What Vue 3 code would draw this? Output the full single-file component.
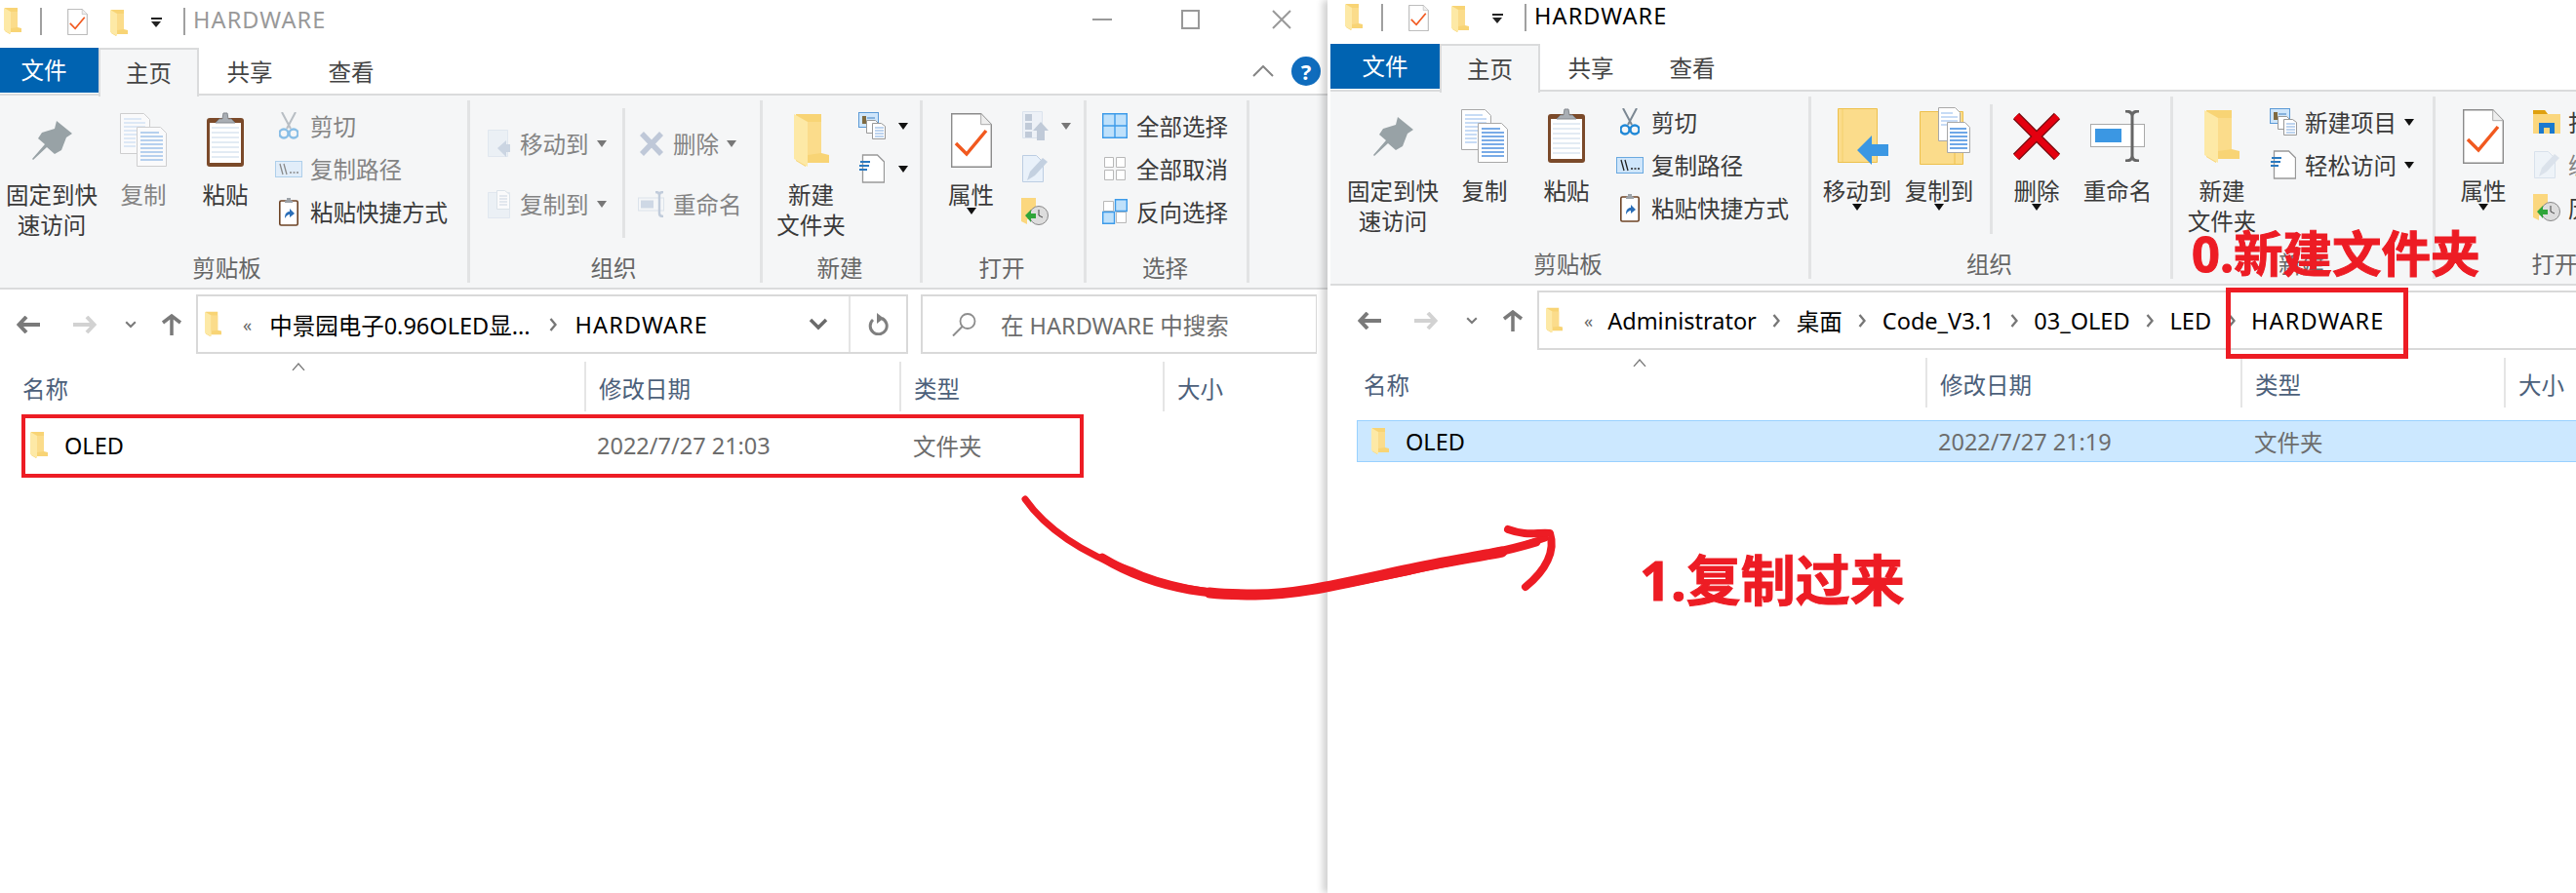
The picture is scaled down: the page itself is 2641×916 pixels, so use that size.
<template>
  <div class="page">
    <!-- shared icon sprite -->
    <svg class="sprite" width="0" height="0">
      <symbol id="folder" viewBox="0 0 18 27">
        <path d="M1 0h13v20l4 1v4H6v2l-5-3z" fill="#f8d475" />
        <path d="M0 0l7 4v23l-7-4z" fill="#fde9a6" />
        <path d="M7 4h7v16l-7 1z" fill="#fbdc8b" />
      </symbol>
      <symbol id="doccheck" viewBox="0 0 42 56">
        <path d="M.7.7h30l10.6 11v43.600H.7z" fill="#fff" stroke="#8b8b8b" stroke-width="1.400" />
        <path d="M30.700.7v11h10.600" fill="#eee" stroke="#aaa" />
        <path d="M5 31l11 11L36 18" fill="none" stroke="#f1591f" stroke-width="3.500" />
      </symbol>
      <symbol id="pin" viewBox="0 0 41 40">
        <path d="M25 0l16 13-6 4-5 13-7 4-8-7L1 40l-1-1 13-15-7-6 4-6 13-4z" fill="#98a2a6" />
      </symbol>
      <symbol id="copy" viewBox="0 0 48 55">
        <path d="M.5.5h24l6 6v35H.5z" fill="#fff" stroke="#a8a8a8" />
        <path d="M4 6h18M4 10h22M4 14h22M4 18h22M4 22h22M4 26h12M4 30h12M4 34h12" stroke="#8fb8ec" />
        <path d="M17.500 14.500h24l6 6v34h-30z" fill="#fff" stroke="#a8a8a8" />
        <path d="M21 20h19M21 24h23M21 28h23M21 32h23M21 36h23M21 40h23M21 44h23M21 48h23" stroke="#4d90e0" stroke-width="1.300" />
      </symbol>
      <symbol id="paste" viewBox="0 0 40 57">
        <rect x="1" y="6" width="38" height="50" rx="3" fill="#7b4a2a" />
        <rect x="4" y="11" width="32" height="41" fill="#fff" />
        <path d="M6 16h28M6 21h28M6 26h28M6 31h28M6 36h28M6 41h28M6 46h28" stroke="#c6d7e8" />
        <path d="M10 11l4-4h3l1-6h4l1 6h3l4 4z" fill="#a9aeb4" stroke="#83888e" />
      </symbol>
      <symbol id="cut" viewBox="0 0 20 28">
        <path d="M3 0l9 17M17 0L8 17" stroke="#7c8893" stroke-width="2" fill="none" />
        <circle cx="5" cy="22" r="4.500" fill="none" stroke="#1f87d6" stroke-width="2.400" />
        <circle cx="15" cy="22" r="4.500" fill="none" stroke="#1f87d6" stroke-width="2.400" />
      </symbol>
      <symbol id="path" viewBox="0 0 28 17">
        <rect x=".5" y=".5" width="27" height="16" fill="#cfe6fb" stroke="#6aa9e0" />
        <path d="M5 3l3 11M9 3l3 11" stroke="#222" stroke-width="1.300" />
        <path d="M15 12h2M18.500 12h2M22 12h2" stroke="#222" stroke-width="1.500" />
      </symbol>
      <symbol id="shortcut" viewBox="0 0 20 29">
        <rect x=".8" y="3" width="18.400" height="25" rx="1.500" fill="#fff" stroke="#6d4325" stroke-width="1.600" />
        <path d="M6 3l2-1V0h4v2l2 1v2H6z" fill="#9ca2a8" />
        <path d="M6 21c0-5 2-7 5-7v-3l5 5-5 4v-3c-2 0-3 1-5 4z" fill="#2c6fb8" />
      </symbol>
      <symbol id="moveBig" viewBox="0 0 52 58">
        <path d="M.5.5h40v55H.5z" fill="#fbdc8b" stroke="#edc04c" />
        <path d="M5 1v54" stroke="#f4cf6c" />
        <path d="M20 43L35 28v9h17v12H35v9z" fill="#3b97e3" />
      </symbol>
      <symbol id="copyBig" viewBox="0 0 52 59">
        <path d="M.5 4.500h44v54H.5z" fill="#fbdc8b" stroke="#edc04c" />
        <path d="M36 46v12" stroke="#edc04c" />
        <path d="M19.500.5h17l5 5v29h-22z" fill="#fff" stroke="#a8a8a8" />
        <path d="M22 6h12M22 10h17M22 14h17M22 18h17" stroke="#8fb8ec" />
        <path d="M28.500 15.500h18l5 5v26h-23z" fill="#fff" stroke="#a8a8a8" />
        <path d="M31 22h17M31 26h18M31 30h18M31 34h18M31 38h18M31 42h18" stroke="#3f8ae0" stroke-width="1.300" />
      </symbol>
      <symbol id="moveSmall" viewBox="0 0 23 28">
        <path d="M.5.500h20v27H.5z" fill="#e2ebf5" stroke="#cdd9e8" />
        <path d="M10 19l9-8v4h4v8h-4v5z" fill="#a2b5cf" />
      </symbol>
      <symbol id="copySmall" viewBox="0 0 23 29">
        <path d="M.5 2.500h22v26H.5z" fill="#e2ebf5" stroke="#cdd9e8" />
        <path d="M9.500.5h8l5 4v15h-13z" fill="#fff" stroke="#c3cfdd" />
        <path d="M12 6h8M12 9h8M12 12h8M12 15h8" stroke="#a2b5cf" />
      </symbol>
      <symbol id="xSmall" viewBox="0 0 26 25">
        <path d="M3 2l20 21M23 2L3 23" stroke="#8a9cba" stroke-width="5.500" fill="none" />
      </symbol>
      <symbol id="renameSmall" viewBox="0 0 28 27">
        <rect x=".5" y="7" width="26" height="13" fill="#f4f7fa" stroke="#c4d1e0" />
        <rect x="3" y="9.500" width="13" height="8" fill="#a9bbd4" />
        <path d="M18 1c3 0 4 1 4 3v19c0 2 1 3 4 3M26 1c-3 0-4 1-4 3M26 26c-3 0-4-1-4-3" fill="none" stroke="#8fa3c0" stroke-width="2.400" />
      </symbol>
      <symbol id="xBig" viewBox="0 0 50 50">
        <path d="M4 4l42 42M46 4L4 46" stroke="#7d0b0f" stroke-width="9" fill="none" />
        <path d="M4 4l42 42M46 4L4 46" stroke="#e4000f" stroke-width="6.500" fill="none" />
      </symbol>
      <symbol id="renameBig" viewBox="0 0 56 53">
        <rect x=".5" y="14.500" width="55" height="23" fill="#fff" stroke="#a9a9a9" />
        <rect x="5" y="19" width="27" height="14" fill="#3b97e3" />
        <path d="M36 1c5 0 7 2 7 5v41c0 3 2 5 7 5M50 1c-5 0-7 2-7 5M50 52c-5 0-7-2-7-5M36 52c5 0 7-2 7-5" fill="none" stroke="#666" stroke-width="3" />
      </symbol>
      <symbol id="newItem" viewBox="0 0 28 28">
        <rect x=".5" y=".5" width="20" height="15" fill="#cfe6fb" stroke="#5c9ad6" />
        <path d="M4 4h4v8H4z" fill="#7f6a40" />
        <path d="M9 6h8M9 9h5" stroke="#3f7fbf" />
        <path d="M8.500 8.500h9l3 3v10h-12z" fill="#fff" stroke="#999" />
        <path d="M14.500 11.500h9l4 3v13h-13z" fill="#fff" stroke="#999" />
        <path d="M17 16h9M17 19h9M17 22h9M17 25h9" stroke="#7ca9df" />
      </symbol>
      <symbol id="easy" viewBox="0 0 26 30">
        <path d="M3.500 1h15l7 7v21h-22z" fill="#fff" stroke="#999" stroke-width="1.300" />
        <path d="M1 8h10M0 12h10M0 16h8" stroke="#2c7ac0" stroke-width="2" />
      </symbol>
      <symbol id="openSmall" viewBox="0 0 27 30">
        <path d="M.5.500h20v27H.5z" fill="#e6eef8" stroke="#c3d2e4" />
        <path d="M3 3h7v7H3zM3 12h7v7H3zM3 21h7v6H3z" fill="#8da0ba" />
        <path d="M19 11l8 9h-4v10h-8V20h-4z" fill="#8da0ba" />
      </symbol>
      <symbol id="openHome" viewBox="0 0 28 24">
        <path d="M0 0h12l3 4h13v20H0z" fill="#fbd77e" />
        <path d="M0 0h12l3 4H0z" fill="#dfa00f" />
        <path d="M6 24v-11h16v11h-5v-6h-6v6z" fill="#1a79cf" />
      </symbol>
      <symbol id="edit" viewBox="0 0 27 28">
        <path d="M.5.5h14l7 7v20H.5z" fill="#e9f1fa" stroke="#bccde2" />
        <path d="M5 26l3-9L21 3l5 4-13 14z" fill="#c3d0e0" />
      </symbol>
      <symbol id="history" viewBox="0 0 28 28">
        <path d="M0 0h15v22H6v5l-6-3z" fill="#fbd77e" />
        <circle cx="18" cy="18" r="9.500" fill="#ddd" stroke="#888" />
        <path d="M18 12v6l4 2" stroke="#444" fill="none" />
        <path d="M4 18l6-6v4h5v5h-5v4z" fill="#2fa53a" />
      </symbol>
      <symbol id="selAll" viewBox="0 0 26 26">
        <path d="M.7.7h24.600v24.600H.7z" fill="#bfe1fb" stroke="#3d9be9" stroke-width="1.400" />
        <path d="M13 1v24M1 13h24" stroke="#3d9be9" stroke-width="1.400" />
      </symbol>
      <symbol id="selNone" viewBox="0 0 26 26">
        <path d="M2.500 1.500h9v10h-9zM14.500 1.500h9v10h-9zM2.500 14.500h9v10h-9zM14.500 14.500h9v10h-9z" fill="#fff" stroke="#b8b8b8" />
      </symbol>
      <symbol id="selInv" viewBox="0 0 26 26">
        <path d="M1.500 2.500h10v10h-10zM14.500 13.500h10v11h-10z" fill="#fff" stroke="#b8b8b8" />
        <path d="M13.500.7h11.800v11.800H13.500zM.7 13.500h11.800v11.800H.7z" fill="#bfe1fb" stroke="#3d9be9" stroke-width="1.400" />
      </symbol>
      <symbol id="navBack" viewBox="0 0 24 18">
        <path d="M10 1L2.500 9l7.500 8M3 9h21" fill="none" stroke="currentColor" stroke-width="4" />
      </symbol>
      <symbol id="navUp" viewBox="0 0 22 22">
        <path d="M2 9l9-7 9 7M11 3v19" fill="none" stroke="currentColor" stroke-width="3.500" />
      </symbol>
      <symbol id="chev" viewBox="0 0 20 13">
        <path d="M2 2l8 8 8-8" fill="none" stroke="currentColor" stroke-width="3.500" />
      </symbol>
      <symbol id="crumbChev" viewBox="0 0 8 14">
        <path d="M1.500 1l5 6-5 6" fill="none" stroke="#777" stroke-width="2.400" />
      </symbol>
      <symbol id="refresh" viewBox="0 0 22 23">
        <path d="M14 5.500A8.500 8.500 0 1 1 5 7" fill="none" stroke="#7f7f7f" stroke-width="3" />
        <path d="M9 0l7 5.500-7 5.500z" fill="#7f7f7f" />
      </symbol>
      <symbol id="search" viewBox="0 0 26 24">
        <circle cx="17" cy="8.500" r="7.500" fill="none" stroke="#8c8c8c" stroke-width="1.800" />
        <path d="M11.500 14L2 23.500" stroke="#8c8c8c" stroke-width="2" />
      </symbol>
    </svg>

    <div v-for="win in windows" :key="win.id" class="win" :class="win.id">
      <div class="win-inner">
        <div class="titlebar">
          <svg class="qa-folder" width="18" height="27"><use href="#folder" /></svg>
          <span class="qa-sep"></span>
          <svg class="qa-doc" width="21" height="27"><use href="#doccheck" /></svg>
          <svg class="qa-folder2" width="18" height="27"><use href="#folder" /></svg>
          <span class="qa-drop"></span>
          <span class="qa-sep last"></span>
          <span class="title-text">HARDWARE</span>
          <div v-if="win.id === 'left'" class="win-controls">
            <span class="ctl-min"></span>
            <span class="ctl-max"></span>
            <svg class="ctl-close" width="20" height="20"><path d="M1 1l18 18M19 1L1 19" stroke="#999" stroke-width="2" /></svg>
          </div>
        </div>

        <div class="tabs">
          <div class="tab file">文件</div>
          <div class="tab home">主页</div>
          <div class="tab">共享</div>
          <div class="tab">查看</div>
          <div v-if="win.id === 'left'" class="tabs-right">
            <svg width="22" height="12"><path d="M1 11L11 1l10 10" fill="none" stroke="#858585" stroke-width="2" /></svg>
            <span class="help">?</span>
          </div>
        </div>

        <div class="ribbon">
          <div v-for="group in win.groups" :key="group.label" class="group" :style="{ width: group.w + 'px' }">
            <div class="group-body" :style="{ paddingLeft: group.pad + 'px' }">
              <template v-for="(block, i) in group.blocks" :key="i">
                <div v-if="block.sep" class="inner-sep" :style="{ marginLeft: block.ml + 'px', marginRight: block.mr + 'px' }"></div>
                <div v-else-if="block.lines" class="big" :class="{ dim: block.dim }" :style="{ width: block.w + 'px' }">
                  <div class="big-icon" :class="{ shifted: block.shift }">
                    <svg :width="sizes[block.icon][0]" :height="sizes[block.icon][1]" :class="{ faded: block.dim }"><use :href="'#' + block.icon" /></svg>
                  </div>
                  <div v-for="line in block.lines" :key="line" class="big-line">{{ line }}</div>
                  <span v-if="block.caret" class="caret under"></span>
                </div>
                <div v-else class="small-col" :class="{ spaced: block.spaced }" :style="{ width: block.w + 'px' }">
                  <div v-for="row in block.rows" :key="row.icon" class="small-row" :class="{ dim: row.dim }">
                    <span class="small-icon">
                      <svg :width="sizes[row.icon][0]" :height="sizes[row.icon][1]" :class="{ faded: row.dim }"><use :href="'#' + row.icon" /></svg>
                    </span>
                    <span v-if="row.text" class="small-text">{{ row.text }}</span>
                    <span v-if="row.caret" class="caret" :class="{ soft: row.dim }"></span>
                  </div>
                </div>
              </template>
            </div>
            <div class="group-label">{{ group.label }}</div>
          </div>
        </div>

        <div class="navrow">
          <svg class="nav back" width="24" height="18"><use href="#navBack" /></svg>
          <svg class="nav fwd" width="24" height="18"><use href="#navBack" /></svg>
          <svg class="nav hist" width="12" height="8"><use href="#chev" /></svg>
          <svg class="nav up" width="22" height="22"><use href="#navUp" /></svg>
          <div class="addr" :style="{ width: win.addrW + 'px' }">
            <svg class="addr-folder" width="17" height="27"><use href="#folder" /></svg>
            <span class="addr-more">«</span>
            <div class="crumbs">
              <template v-for="(c, i) in win.crumbs" :key="c">
                <span v-if="i" class="crumb-arrow">
                  <svg width="8" height="14"><use href="#crumbChev" /></svg>
                </span>
                <span class="crumb" :class="{ wide: c === 'HARDWARE' }">{{ c }}</span>
              </template>
            </div>
            <svg class="addr-chev" width="20" height="13"><use href="#chev" /></svg>
            <div class="addr-refresh">
              <svg width="22" height="23"><use href="#refresh" /></svg>
            </div>
          </div>
          <div class="searchbox">
            <svg width="26" height="24"><use href="#search" /></svg>
            <span>在 HARDWARE 中搜索</span>
          </div>
        </div>

        <div class="list-head">
          <svg class="sort" width="14" height="8"><path d="M1 8l6-7 6 7" fill="none" stroke="#777" stroke-width="1.200" /></svg>
          <div class="col c-name">名称</div>
          <div class="col c-date">修改日期</div>
          <div class="col c-type">类型</div>
          <div class="col c-size">大小</div>
        </div>

        <div class="list-row" :class="{ selected: win.selected }">
          <svg class="row-folder" width="18" height="27"><use href="#folder" /></svg>
          <span class="row-name">OLED</span>
          <span class="row-date">{{ win.date }}</span>
          <span class="row-type">文件夹</span>
        </div>
      </div>
    </div>

    <!-- annotations drawn over the screenshot -->
    <div class="mark mark-row"></div>
    <div class="mark mark-crumb"></div>
    <svg class="arrow" width="2641" height="916">
      <g fill="none" stroke="#ed1c24" stroke-linecap="round" stroke-linejoin="round">
        <path stroke-width="7" d="M1051 512C1072 542 1110 568 1159 585C1190 600 1240 610 1287 610C1330 610 1370 600 1446 585C1490 574 1530 572 1584 552" />
        <path stroke-width="9" d="M1130 572C1160 590 1190 600 1220 605C1250 610 1270 610 1287 610C1330 610 1370 600 1446 585C1490 574 1530 570 1575 556" />
        <path stroke-width="11" d="M1240 608C1260 610 1275 610 1287 610C1330 610 1370 600 1440 585C1480 576 1510 572 1540 566" />
        <path stroke-width="8" d="M1546 543C1565 550 1575 546 1589 547C1595 565 1585 585 1564 602" />
      </g>
    </svg>
    <div class="note note-new">0.新建文件夹</div>
    <div class="note note-copy">1.复制过来</div>
  </div>
</template>

<script setup>
const sizes = {
  pin: [41, 40], copy: [48, 55], paste: [40, 57], cut: [20, 28], path: [28, 17], shortcut: [20, 29],
  moveBig: [52, 58], copyBig: [52, 59], moveSmall: [23, 28], copySmall: [23, 29],
  xSmall: [26, 25], renameSmall: [28, 27], xBig: [50, 50], renameBig: [56, 53],
  folder: [36, 54], doccheck: [42, 56], newItem: [28, 28], easy: [26, 30],
  openSmall: [27, 30], openHome: [28, 24], edit: [27, 28], history: [28, 28],
  selAll: [26, 26], selNone: [26, 26], selInv: [26, 26],
}

const clipboard = (dim) => ({
  label: '剪贴板', w: 493, pad: 8,
  blocks: [
    { icon: 'pin', lines: ['固定到快', '速访问'], w: 112 },
    { icon: 'copy', lines: ['复制'], w: 76, dim },
    { icon: 'paste', lines: ['粘贴'], w: 92 },
    { w: 190, rows: [
      { icon: 'cut', text: '剪切', dim },
      { icon: 'path', text: '复制路径', dim },
      { icon: 'shortcut', text: '粘贴快捷方式' },
    ] },
  ],
})

const windows = [
  {
    id: 'left', addrW: 730, date: '2022/7/27 21:03', selected: false,
    crumbs: ['中景园电子0.96OLED显...', 'HARDWARE'],
    groups: [
      clipboard(true),
      { label: '组织', w: 300, pad: 10, blocks: [
        { w: 146, spaced: true, rows: [
          { icon: 'moveSmall', text: '移动到', caret: true, dim: true },
          { icon: 'copySmall', text: '复制到', caret: true, dim: true },
        ] },
        { sep: true, ml: 0, mr: 8 },
        { w: 125, spaced: true, rows: [
          { icon: 'xSmall', text: '删除', caret: true, dim: true },
          { icon: 'renameSmall', text: '重命名', dim: true },
        ] },
      ] },
      { label: '新建', w: 164, pad: 6, blocks: [
        { icon: 'folder', lines: ['新建', '文件夹'], w: 87 },
        { w: 60, rows: [
          { icon: 'newItem', caret: true },
          { icon: 'easy', caret: true },
        ] },
      ] },
      { label: '打开', w: 168, pad: 3, blocks: [
        { icon: 'doccheck', lines: ['属性'], w: 93, caret: true },
        { w: 60, rows: [
          { icon: 'openSmall', caret: true, dim: true },
          { icon: 'edit' },
          { icon: 'history' },
        ] },
      ] },
      { label: '选择', w: 167, pad: 10, blocks: [
        { w: 150, rows: [
          { icon: 'selAll', text: '全部选择' },
          { icon: 'selNone', text: '全部取消' },
          { icon: 'selInv', text: '反向选择' },
        ] },
      ] },
    ],
  },
  {
    id: 'right', addrW: 1300, date: '2022/7/27 21:19', selected: true,
    crumbs: ['Administrator', '桌面', 'Code_V3.1', '03_OLED', 'LED', 'HARDWARE'],
    groups: [
      clipboard(false),
      { label: '组织', w: 371, pad: 5, blocks: [
        { icon: 'moveBig', lines: ['移动到'], w: 84, caret: true, shift: true },
        { icon: 'copyBig', lines: ['复制到'], w: 84, caret: true, shift: true },
        { sep: true, ml: 10, mr: 0 },
        { icon: 'xBig', lines: ['删除'], w: 90, caret: true },
        { icon: 'renameBig', lines: ['重命名'], w: 76 },
      ] },
      { label: '新建', w: 269, pad: 6, blocks: [
        { icon: 'folder', lines: ['新建', '文件夹'], w: 88 },
        { w: 170, rows: [
          { icon: 'newItem', text: '新建项目', caret: true },
          { icon: 'easy', text: '轻松访问', caret: true },
        ] },
      ] },
      { label: '打开', w: 250, pad: 3, blocks: [
        { icon: 'doccheck', lines: ['属性'], w: 92, caret: true },
        { w: 150, rows: [
          { icon: 'openHome', text: '打开', caret: true },
          { icon: 'edit', text: '编辑', dim: true },
          { icon: 'history', text: '历史记录' },
        ] },
      ] },
    ],
  },
]
</script>

<style>
html, body {
  margin: 0;
  background: #fff;
}
</style>

<style scoped>
.page {
  position: relative;
  display: flex;
  width: 2641px;
  height: 916px;
  overflow: hidden;
  background: #fff;
  font-family: "Noto Sans", "Noto Sans CJK SC", sans-serif;
  font-size: 23.5px;
  color: #3a3a3a;
}

.sprite {
  position: absolute;
}

.win {
  height: 916px;
  overflow: hidden;
  background: #fff;
  flex: none;
}

.win.left {
  width: 1361px;
}

.win.right {
  position: relative;
  width: 1280px;
  box-shadow: -5px 0 7px rgba(0, 0, 0, 0.18);
}

.win-inner {
  width: 1372px;
}

.left .win-inner {
  margin-left: -11px;
}

.right .win-inner {
  margin-top: -4px;
  margin-left: 3px;
}

/* title bar */
.titlebar {
  display: flex;
  align-items: flex-start;
  height: 49px;
  padding: 8px 0 0 15px;
  box-sizing: border-box;
}

.qa-sep {
  width: 2px;
  height: 28px;
  margin-left: 19px;
  background: #a0a0a0;
}

.qa-doc {
  margin-left: 26px;
  margin-top: 1px;
}

.qa-folder2 {
  margin-left: 23px;
  margin-top: 2px;
}

.qa-drop {
  position: relative;
  width: 11px;
  height: 9px;
  margin: 10px 0 0 24px;
  border-top: 2px solid #222;
  box-sizing: border-box;
}

.qa-drop::after {
  content: "";
  position: absolute;
  top: 2px;
  left: 0;
  border-left: 5.5px solid transparent;
  border-right: 5.5px solid transparent;
  border-top: 6px solid #222;
}

.qa-sep.last {
  margin-left: 22px;
}

.title-text {
  margin-left: 8px;
  margin-top: -2px;
  line-height: 28px;
  letter-spacing: 1.1px;
}

.left .title-text {
  color: #999;
}

.right .title-text {
  color: #000;
}

.win-controls {
  display: flex;
  align-items: center;
  height: 24px;
  margin-left: auto;
  padding-right: 37px;
}

.ctl-min {
  width: 20px;
  height: 2px;
  background: #999;
}

.ctl-max {
  width: 15px;
  height: 16px;
  margin-left: 71px;
  border: 2px solid #999;
}

.ctl-close {
  margin-left: 74px;
}

/* tabs */
.tabs {
  display: flex;
  height: 49px;
  box-sizing: border-box;
  border-bottom: 2px solid #dadbdc;
}

.tab {
  width: 104px;
  height: 49px;
  line-height: 50px;
  text-align: center;
  box-sizing: border-box;
  color: #444;
}

.tab.file {
  width: 112px;
  height: 46px;
  line-height: 46px;
  background: #0063b1;
  color: #fff;
}

.tab.home {
  width: 103px;
  background: #f5f6f7;
  border: 2px solid #dadbdc;
  border-bottom: 0;
  position: relative;
  height: 50px;
  line-height: 48px;
}

.tabs-right {
  display: flex;
  align-items: center;
  margin-left: auto;
  height: 47px;
  padding-right: 7px;
}

.help {
  width: 30px;
  height: 30px;
  margin-left: 18px;
  border-radius: 50%;
  background: #0f6cbd;
  color: #fff;
  font-size: 22px;
  font-weight: 700;
  line-height: 30px;
  text-align: center;
}

/* ribbon */
.ribbon {
  display: flex;
  height: 199px;
  box-sizing: border-box;
  background: #f5f6f7;
  border-bottom: 2px solid #dadbdc;
}

.group {
  position: relative;
  flex: none;
  box-sizing: border-box;
}

.group::after {
  content: "";
  position: absolute;
  top: 5px;
  right: 0;
  bottom: 5px;
  width: 3px;
  background: #e2e3e4;
}

.group-body {
  display: flex;
  height: 160px;
  box-sizing: border-box;
}

.group-label {
  height: 34px;
  padding-right: 6px;
  line-height: 34px;
  text-align: center;
  color: #666;
}

.big {
  display: flex;
  flex-direction: column;
  align-items: center;
  flex: none;
}

.big-icon {
  display: flex;
  align-items: center;
  justify-content: center;
  height: 83px;
  padding-top: 4px;
  box-sizing: content-box;
}

.big-icon.shifted {
  margin-left: 12px;
}

.big-line {
  line-height: 31px;
  white-space: nowrap;
}

.dim {
  color: #848484;
}

.faded {
  opacity: 0.5;
}

.small-col {
  flex: none;
  padding-top: 9px;
}

.small-col.spaced {
  padding-top: 18px;
}

.small-row {
  display: flex;
  align-items: center;
  height: 44px;
  white-space: nowrap;
}

.spaced .small-row {
  height: 62px;
}

.small-icon {
  display: flex;
  align-items: center;
  justify-content: center;
  width: 38px;
  height: 30px;
  flex: none;
}

.small-text {
  margin-left: 3px;
}

.caret {
  flex: none;
  margin-left: 8px;
  border-left: 5.5px solid transparent;
  border-right: 5.5px solid transparent;
  border-top: 7px solid #111;
}

.caret.soft {
  border-top-color: #777;
}

.caret.under {
  margin: -3px 0 0;
}

.inner-sep {
  flex: none;
  width: 3px;
  height: 133px;
  margin-top: 13px;
  background: #e2e3e4;
}

/* address row */
.navrow {
  display: flex;
  align-items: center;
  height: 61px;
  margin-top: 5px;
  color: #7a7a7a;
}

.nav {
  flex: none;
}

.nav.back {
  margin-left: 28px;
  color: #7a7a7a;
}

.nav.fwd {
  margin-left: 34px;
  color: #d2d2d2;
  transform: scaleX(-1);
}

.nav.hist {
  margin-left: 29px;
  color: #7a7a7a;
}

.nav.up {
  margin-left: 25px;
  color: #7a7a7a;
}

.addr {
  display: flex;
  align-items: center;
  flex: none;
  height: 61px;
  margin-left: 14px;
  box-sizing: border-box;
  border: 2px solid #d9d9d9;
  color: #000;
}

.addr-folder {
  margin-left: 7px;
  flex: none;
}

.addr-more {
  margin-left: 22px;
  color: #666;
  font-size: 18px;
}

.crumbs {
  display: flex;
  align-items: center;
  flex: 1;
  margin-left: 15px;
  white-space: nowrap;
}

.left .crumbs {
  margin-left: 18px;
}

.crumb.wide {
  letter-spacing: 1.1px;
}

.crumb-arrow {
  display: flex;
  align-items: center;
  justify-content: center;
  width: 41px;
}

.left .crumb-arrow {
  width: 46px;
}

.addr-chev {
  flex: none;
  color: #6a6a6a;
  margin-right: 21px;
}

.addr-refresh {
  display: flex;
  align-items: center;
  justify-content: center;
  flex: none;
  width: 59px;
  height: 100%;
  border-left: 2px solid #e4e4e4;
  box-sizing: border-box;
}

.searchbox {
  display: flex;
  align-items: center;
  flex: none;
  width: 406px;
  height: 61px;
  margin-left: 13px;
  padding-left: 29px;
  box-sizing: border-box;
  border: 2px solid #d9d9d9;
  border-right-width: 1px;
  color: #6d6d6d;
}

.searchbox span {
  margin-left: 25px;
  white-space: nowrap;
}

/* file list */
.list-head {
  position: relative;
  display: flex;
  height: 51px;
  margin-top: 8px;
  color: #4c607a;
}

.sort {
  position: absolute;
  top: 1px;
  left: 310px;
}

.col {
  box-sizing: border-box;
  height: 100%;
  padding-top: 10px;
  line-height: 36px;
  border-right: 2px solid #e5e5e5;
}

.c-name {
  width: 612px;
  padding-left: 34px;
}

.c-date {
  width: 323px;
  padding-left: 13px;
}

.c-type {
  width: 270px;
  padding-left: 13px;
}

.c-size {
  border: 0;
  padding-left: 13px;
}

.list-row {
  position: relative;
  display: flex;
  align-items: center;
  width: 1300px;
  height: 43px;
  margin: 13px 0 0 27px;
  box-sizing: border-box;
  border: 1px solid transparent;
  color: #6d6d6d;
}

.list-row.selected {
  background: #cce8ff;
  border-color: #99d1ff;
}

.row-folder {
  flex: none;
  margin-left: 14px;
}

.row-name {
  width: 546px;
  margin-left: 17px;
  flex: none;
  color: #000;
}

.row-date {
  width: 324px;
  flex: none;
}

/* annotations */
.mark {
  position: absolute;
  box-sizing: border-box;
  border: 4px solid #ed1c24;
}

.mark-row {
  top: 425px;
  left: 22px;
  width: 1089px;
  height: 65px;
}

.mark-crumb {
  top: 295px;
  left: 2282px;
  width: 187px;
  height: 73px;
  border-width: 5px;
}

.arrow {
  position: absolute;
  top: 0;
  left: 0;
  pointer-events: none;
}

.note {
  position: absolute;
  color: #ed1c24;
  font-weight: 700;
  -webkit-text-stroke: 1px #ed1c24;
  white-space: nowrap;
}

.note-new {
  top: 225px;
  left: 2247px;
  font-size: 50.5px;
  line-height: 70px;
}

.note-copy {
  top: 556px;
  left: 1681px;
  font-size: 56px;
  line-height: 76px;
}
</style>
